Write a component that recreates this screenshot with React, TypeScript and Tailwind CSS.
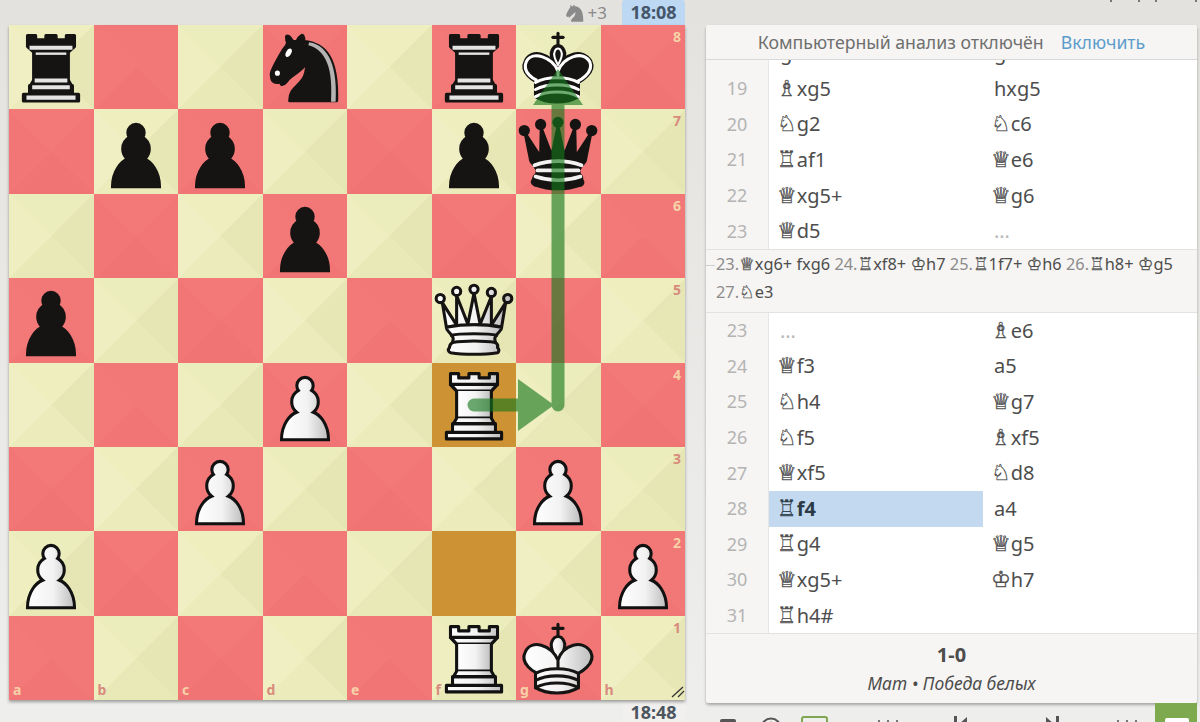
import React from "react";

const LIGHT_A = "bg-[conic-gradient(from_45deg,#e7e7b6_0_90deg,#ebebbb_90deg_180deg,#efefc3_180deg_270deg,#eeeebf_270deg_360deg)]";
const LIGHT_B = "bg-[conic-gradient(from_45deg,#e6e6b4_0_90deg,#e9e9b8_90deg_180deg,#eeeec1_180deg_270deg,#ecedbd_270deg_360deg)]";
const DARK_A = "bg-[conic-gradient(from_45deg,#f27777_0_90deg,#f17575_90deg_180deg,#f37979_180deg_270deg,#f27777_270deg_360deg)]";
const DARK_B = "bg-[conic-gradient(from_45deg,#f27676_0_90deg,#f07474_90deg_180deg,#f27676_180deg_270deg,#f37878_270deg_360deg)]";

const common = { fillRule: "evenodd" as const, stroke: "#000", strokeWidth: 1.5, strokeLinecap: "round" as const, strokeLinejoin: "round" as const };
const W = "url(#wg)";
const PAWN = "M22.5 9c-2.21 0-4 1.79-4 4 0 .89.29 1.71.78 2.38C17.33 16.5 16 18.59 16 21c0 2.03.94 3.84 2.41 5.03-3 1.06-7.41 5.55-7.41 13.47h23c0-7.92-4.41-12.41-7.41-13.47 1.47-1.19 2.41-3 2.41-5.03 0-2.41-1.33-4.5-3.28-5.62.49-.67.78-1.49.78-2.38 0-2.21-1.79-4-4-4z";

const pieces: Record<string, React.ReactNode> = {
  P: <path d={PAWN} fill={W} stroke="#111" strokeWidth={1.5} strokeLinecap="round" />,
  p: <path d={PAWN} fill="#161412" stroke="#161412" strokeWidth={1.5} strokeLinecap="round" />,
  R: (
    <g {...common} stroke="#111" fill={W}>
      <path d="M9 39h27v-3H9v3zM12 36v-4h21v4H12zM11 14V9h4v2h5V9h5v2h5V9h4v5" strokeLinecap="butt" />
      <path d="M34 14l-3 3H14l-3-3" />
      <path d="M31 17v12.5H14V17" strokeLinecap="butt" strokeLinejoin="miter" />
      <path d="M31 29.5l1.5 2.5h-20l1.5-2.5" />
      <path d="M11 14h23" fill="none" strokeLinejoin="miter" />
    </g>
  ),
  r: (
    <g {...common} fill="#161412" stroke="#161412">
      <path d="M9 39h27v-3H9v3zM12.5 32l1.5-2.5h17l1.5 2.5h-20zM12 36v-4h21v4H12z" strokeLinecap="butt" />
      <path d="M14 29.5v-13h17v13H14z" strokeLinecap="butt" strokeLinejoin="miter" />
      <path d="M14 16.5L11 14h23l-3 2.5H14zM11 14V9h4v2h5V9h5v2h5V9h4v5H11z" strokeLinecap="butt" />
      <path d="M12 14.6h21M14.5 29.6h16M13.3 32.7h18.4M10.5 37.5h24" fill="none" stroke="#e4e4e4" strokeWidth={1.9} strokeLinecap="butt" strokeLinejoin="miter" />
      <path d="M15 17.3h15" fill="none" stroke="#e4e4e4" strokeWidth={1.1} strokeLinecap="butt" />
    </g>
  ),
  n: (
    <g {...common} fill="none" stroke="#161412">
      <path d="M22 10c10.5 1 16.5 8 16 29H15c0-9 10-6.5 8-21" fill="#161412" />
      <path d="M24 18c.38 2.91-5.55 7.37-8 9-3 2-2.82 4.34-5 4-1.042-.94 1.41-3.04 0-3-1 0 .19 1.23-1 2-1 0-4.003 1-4-4 0-2 6-12 6-12s1.89-1.9 2-3.5c-.73-.994-.5-2-.5-3 1-1 3 2.5 3 2.5h2s.78-1.992 2.5-3c1 0 1 3 1 3" fill="#161412" />
      <path d="M9.5 25.5a.5.5 0 1 1-1 0 .5.5 0 1 1 1 0zm5.433-9.75a.5 1.5 30 1 1-.866-.5.5 1.5 30 1 1 .866.5z" fill="#fff" stroke="#fff" />
      <path d="M24.55 10.4l-.45 1.45.5.15c3.15 1 5.65 2.49 7.9 6.75S35.75 29.06 35.25 39l-.05.5h2.25l.05-.5c.5-10.06-.88-16.85-3.25-21.34-2.37-4.49-5.79-6.64-9.19-7.16l-.51-.1z" fill="#b5b3b3" stroke="none" />
    </g>
  ),
  k: (
    <g {...common} fill="none" stroke="#161412">
      <path d="M22.5 11.63V6" strokeLinejoin="miter" />
      <path d="M22.5 25s4.5-7.5 3-10.5c0 0-1-2.5-3-2.5s-3 2.5-3 2.5c-1.5 3 3 10.5 3 10.5" fill="#161412" strokeLinecap="butt" strokeLinejoin="miter" />
      <path d="M11.5 37c5.5 3.5 15.5 3.5 21 0v-7s9-4.5 6-10.5c-4-6.5-13.5-3.5-16 4V27v-3.5c-3.5-7.5-13-10.5-16-4-3 6 5 10 5 10V37z" fill="#161412" />
      <path d="M20 8h5" strokeLinejoin="miter" />
      <path d="M22.5 21.5s2.6-4.7 1.6-6.6c0 0-.6-1.4-1.6-1.4s-1.6 1.4-1.6 1.4c-1 1.9 1.6 6.6 1.6 6.6" stroke="#fff" strokeWidth={1} />
      <path d="M32 29.5s8.5-4 6.03-9.65C34.15 14 25 18 22.5 24.5l.01 2.1-.01-2.1C20 18 9.906 14 6.997 19.85c-2.497 5.65 4.853 9 4.853 9" stroke="#fff" />
      <path d="M11.5 30c5.5-3 15.5-3 21 0m-21 3.5c5.5-3 15.5-3 21 0m-21 3.5c5.5-3 15.5-3 21 0" stroke="#fff" />
    </g>
  ),
  K: (
    <g {...common} stroke="#161412" fill="none">
      <path d="M22.5 11.63V6M20 8h5" strokeLinejoin="miter" />
      <path d="M22.5 25s4.5-7.5 3-10.5c0 0-1-2.5-3-2.5s-3 2.5-3 2.5c-1.5 3 3 10.5 3 10.5" fill={W} strokeLinecap="butt" strokeLinejoin="miter" />
      <path d="M11.5 37c5.5 3.5 15.5 3.5 21 0v-7s9-4.5 6-10.5c-4-6.5-13.5-3.5-16 4V27v-3.5c-3.5-7.5-13-10.5-16-4-3 6 5 10 5 10V37z" fill={W} />
      <path d="M11.5 30c5.5-3 15.5-3 21 0m-21 3.5c5.5-3 15.5-3 21 0m-21 3.5c5.5-3 15.5-3 21 0" />
    </g>
  ),
  Q: (
    <g {...common} stroke="#161412" fill={W}>
      <path d="M8 12a2 2 0 1 1-4 0 2 2 0 1 1 4 0zM24.5 7.5a2 2 0 1 1-4 0 2 2 0 1 1 4 0zM41 12a2 2 0 1 1-4 0 2 2 0 1 1 4 0zM16 8.5a2 2 0 1 1-4 0 2 2 0 1 1 4 0zM33 9a2 2 0 1 1-4 0 2 2 0 1 1 4 0z" />
      <path d="M9 26c8.5-1.5 21-1.5 27 0l2-12-7 11V11l-5.5 13.5-3-15-3 15-5.5-14V25L7 14l2 12z" strokeLinecap="butt" />
      <path d="M9 26c0 2 1.5 2 2.5 4 1 1.5 1 1 .5 3.5-1.5 1-1.5 2.5-1.5 2.5-1.5 1.5.5 2.5.5 2.5 6.5 1 16.5 1 23 0 0 0 1.5-1 0-2.5 0 0 .5-1.5-1-2.5-.5-2.5-.5-2 .5-3.5 1-2 2.5-2 2.5-4-8.5-1.5-18.5-1.5-27 0z" strokeLinecap="butt" />
      <path d="M11.5 30c3.5-1 18.5-1 22 0M12 33.5c6-1 15-1 21 0" fill="none" />
    </g>
  ),
  q: (
    <g {...common} fill="#161412" stroke="#161412">
      <g stroke="none">
        <circle cx="6" cy="12" r="2.75" />
        <circle cx="14" cy="9" r="2.75" />
        <circle cx="22.5" cy="8" r="2.75" />
        <circle cx="31" cy="9" r="2.75" />
        <circle cx="39" cy="12" r="2.75" />
      </g>
      <path d="M9 26c8.5-1.5 21-1.5 27 0l2.5-12.5L31 25l-.3-14.1-5.2 13.6-3-14.5-3 14.5-5.2-13.6L14 25 6.5 13.5 9 26z" strokeLinecap="butt" />
      <path d="M9 26c0 2 1.5 2 2.5 4 1 1.5 1 1 .5 3.5-1.5 1-1.5 2.5-1.5 2.5-1.5 1.5.5 2.5.5 2.5 6.5 1 16.5 1 23 0 0 0 1.5-1 0-2.5 0 0 .5-1.5-1-2.5-.5-2.5-.5-2 .5-3.5 1-2 2.5-2 2.5-4-8.5-1.5-18.5-1.5-27 0z" strokeLinecap="butt" />
      <path d="M11 38.5a35 35 1 0 0 23 0" fill="none" strokeLinecap="butt" />
      <path d="M11 29a35 35 1 0 1 23 0M12.5 31.5h20M11.5 34.5a35 35 1 0 0 22 0" fill="none" stroke="#f2f2f2" strokeWidth={1.8} />
    </g>
  ),
};

function Piece({ p }: { p: string }) {
  const rook = p === "r" || p === "R";
  return (
    <svg viewBox="0 0 45 45" preserveAspectRatio="none" className={rook ? "w-[92px] h-[98px] mb-[4px] shrink-0" : "w-[92px] h-[92px] shrink-0"}>
      <defs>
        <linearGradient id="wg" x1="0" y1="0" x2="1" y2="0">
          <stop offset="0" stopColor="#ffffff" />
          <stop offset="0.55" stopColor="#f2f2f2" />
          <stop offset="1" stopColor="#bdbdbd" />
        </linearGradient>
      </defs>
      {pieces[p]}
    </svg>
  );
}

const position = [
  "r..n.rk.",
  ".pp..pq.",
  "...p....",
  "p....Q..",
  "...P.R..",
  "..P...P.",
  "P......P",
  ".....RK.",
];

function Board() {
  const files = "abcdefgh";
  return (
    <div className="relative grid grid-cols-8 grid-rows-8 w-[676px] h-[675px] shadow-[0_2px_3px_rgba(0,0,0,0.35)]">
      {position.flatMap((row, r) =>
        row.split("").map((c, f) => {
          const light = (r + f) % 2 === 0;
          const v = (r * 3 + f) % 4 < 2;
          const hl = f === 5 && (r === 4 || r === 6);
          const bg = hl ? "bg-[#cc9233]" : light ? (v ? LIGHT_A : LIGHT_B) : v ? DARK_A : DARK_B;
          const labelColor = light ? "text-[#d88b7c]" : "text-[#f6d2a8]";
          return (
            <div key={`${r}-${f}`} className={`relative flex items-center justify-center ${bg}`}>
              {c !== "." && <Piece p={c} />}
              {f === 7 && (
                <span className={`absolute right-[4px] top-[2px] text-[14px] font-bold leading-[20px] ${labelColor}`}>{8 - r}</span>
              )}
              {r === 7 && (
                <span className={`absolute left-[4px] bottom-0 text-[14px] font-bold leading-[20px] ${labelColor}`}>{files[f]}</span>
              )}
            </div>
          );
        })
      )}
      <svg viewBox="0 0 676 675" className="absolute inset-0 w-full h-full pointer-events-none">
        <g fill="#15781b" opacity="0.62">
          <path d="M465 373.5H509V386.5H465A6.5 6.5 0 0 1 465 373.5Z" />
          <path d="M509 354L545 380L509 406Z" />
          <path d="M542.5 80H555.5V380A6.5 6.5 0 0 1 542.5 380Z" />
          <path d="M524 80L549 44L574 80Z" />
        </g>
        <path d="M663 672L674 662M669 672L675 666" stroke="#333" strokeWidth="1.3" fill="none" />
      </svg>
    </div>
  );
}

type Move = [string, string, string];
const movesA: Move[] = [
  ["18", "g4", "g5"],
  ["19", "♗xg5", "hxg5"],
  ["20", "♘g2", "♘c6"],
  ["21", "♖af1", "♕e6"],
  ["22", "♕xg5+", "♕g6"],
  ["23", "♕d5", "…"],
];
const movesB: Move[] = [
  ["23", "…", "♗e6"],
  ["24", "♕f3", "a5"],
  ["25", "♘h4", "♕g7"],
  ["26", "♘f5", "♗xf5"],
  ["27", "♕xf5", "♘d8"],
  ["28", "♖f4", "a4"],
  ["29", "♖g4", "♕g5"],
  ["30", "♕xg5+", "♔h7"],
  ["31", "♖h4#", ""],
];

const FIG = "♔♕♖♗♘";

function San({ text, small }: { text: string; small?: boolean }) {
  const fig = text && FIG.includes(text[0]) ? text[0] : "";
  const rest = fig ? text.slice(1) : text;
  return (
    <span>
      {fig && (
        <span className={small ? "text-[17.5px] leading-none [-webkit-text-stroke:0.25px_currentColor]" : "text-[22px] leading-none [-webkit-text-stroke:0.3px_currentColor]"}>
          {fig}
        </span>
      )}
      {rest}
    </span>
  );
}

function Cell({ text, active }: { text: string; active?: boolean }) {
  const cls = active
    ? "bg-[#c3d9f0] font-bold text-[#2b3a46]"
    : text === "…"
    ? "text-[#b8b8b8]"
    : "text-[#4d4d4d]";
  const pad = text && FIG.includes(text[0]) ? "pl-[8px]" : "pl-[11px]";
  return (
    <div className={`h-full flex items-center ${pad} ${cls}`}>
      <San text={text} />
    </div>
  );
}

function Rows({ moves }: { moves: Move[] }) {
  return (
    <div className="grid grid-cols-[63px_214px_1fr] auto-rows-[35.6px] text-[20px]">
      {moves.map((m) => (
        <React.Fragment key={m[0] + m[1]}>
          <div className="flex items-center justify-center bg-[#f6f5f3] border-r border-[#e6e6e6] text-[#b4b4b4] text-[18px]">{m[0]}</div>
          <Cell text={m[1]} active={m[1] === "♖f4"} />
          <Cell text={m[2]} />
        </React.Fragment>
      ))}
    </div>
  );
}

function Ply({ n, moves }: { n: string; moves: string[] }) {
  return (
    <>
      <span className="text-[#8c8c8c]">{n}.</span>
      {moves.map((m, i) => (
        <React.Fragment key={m}>
          {i > 0 && " "}
          <San text={m} small />
        </React.Fragment>
      ))}{" "}
    </>
  );
}

function Toolbar() {
  const ink = "#555";
  return (
    <div className="flex items-start h-[19px] overflow-hidden">
      <svg className="ml-[13px] mt-[15px] shrink-0" width="18" height="22" viewBox="0 0 18 22">
        <rect x="1" y="1" width="16" height="20" rx="2" fill={ink} />
      </svg>
      <svg className="ml-[23px] mt-[14px] shrink-0" width="22" height="22" viewBox="0 0 22 22">
        <circle cx="11" cy="11" r="9.5" fill="none" stroke={ink} strokeWidth="2" />
        <circle cx="11" cy="11" r="5.5" fill="none" stroke={ink} strokeWidth="1.5" />
      </svg>
      <div className="ml-[19px] mt-[13px] w-[27px] h-[22px] rounded-[3px] border-2 border-[#7fa650] shrink-0"></div>
      <svg className="ml-[48px] mt-[17px] shrink-0" width="24" height="12" viewBox="0 0 24 12">
        <path d="M3 0v12M12 0v12M21 0v12" stroke="#777" strokeWidth="2" />
      </svg>
      <svg className="ml-[52px] mt-[13px] shrink-0" width="18" height="14" viewBox="0 0 18 14">
        <path d="M2 0h3v14H2zM15 1L7 8l8 6z" fill={ink} />
      </svg>
      <svg className="ml-[73px] mt-[13px] shrink-0" width="18" height="14" viewBox="0 0 18 14">
        <path d="M13 0h3v14h-3zM3 1l8 7-8 6z" fill={ink} />
      </svg>
      <svg className="ml-[54px] mt-[17px] shrink-0" width="24" height="12" viewBox="0 0 24 12">
        <path d="M3 0v12M12 0v12M21 0v12" stroke="#777" strokeWidth="2" />
      </svg>
      <div className="ml-[16px] w-[43px] h-[19px] bg-[#7fa94f] flex justify-center shrink-0">
        <div className="mt-[15px] w-[24px] h-[10px] bg-white rounded-[2px]"></div>
      </div>
    </div>
  );
}

function MoveList() {
  return (
    <div className="w-[491px] h-[678px] shrink-0 flex flex-col rounded-[3px] bg-white shadow-[0_2px_3px_rgba(0,0,0,0.3)]">
      <div className="h-[35px] shrink-0 flex items-center justify-center gap-[17px] bg-[#f6f5f3] border-b border-[#d9d9d9] text-[17.7px] rounded-t-[3px]">
        <span className="text-[#6f6f6f]">Компьютерный анализ отключён</span>
        <span className="text-[#5c9ccc]">Включить</span>
      </div>
      <div className="h-[189px] shrink-0 overflow-hidden">
        <div className="-mt-[24.6px]">
          <Rows moves={movesA} />
        </div>
      </div>
      <div className="relative h-[64px] shrink-0 bg-[#f6f5f3] border-y border-[#e2e2e2] pl-[10px] pr-[10px] text-[16.35px] leading-[28px] text-[#4d4d4d]">
        <span className="absolute left-0 top-[15px] w-[9px] h-px bg-[#cfcfcf]"></span>
        <Ply n="23" moves={["♕xg6+", "fxg6"]} />
        <Ply n="24" moves={["♖xf8+", "♔h7"]} />
        <Ply n="25" moves={["♖1f7+", "♔h6"]} />
        <Ply n="26" moves={["♖h8+", "♔g5"]} />
        <Ply n="27" moves={["♘e3"]} />
      </div>
      <div className="h-[320px] shrink-0 overflow-hidden">
        <Rows moves={movesB} />
      </div>
      <div className="flex-1 flex flex-col items-center justify-center bg-[#f6f5f3] border-t border-[#e2e2e2] rounded-b-[3px]">
        <div className="text-[20px] font-bold text-[#4d4d4d] leading-[28px]">1-0</div>
        <div className="text-[17.5px] italic text-[#4d4d4d] leading-[28px]">Мат • Победа белых</div>
      </div>
    </div>
  );
}

export default function App() {
  return (
    <div className="flex w-[1200px] h-[722px] overflow-hidden pl-[9px] bg-[linear-gradient(180deg,#e3e2de_0px,#e6e5e2_120px,#eeeeed_722px)] font-['Noto_Sans','DejaVu_Sans',sans-serif]">
      <div className="w-[676px] shrink-0 flex flex-col">
        <div className="h-[25px] flex items-center justify-end">
          <svg viewBox="0 0 45 45" className="w-[24px] h-[24px] mr-[1px]">
            <path d="M22 10c10.5 1 16.5 8 16 29H15c0-9 10-6.5 8-21M24 18c.38 2.91-5.55 7.37-8 9-3 2-2.82 4.34-5 4-1.042-.94 1.41-3.04 0-3-1 0 .19 1.23-1 2-1 0-4.003 1-4-4 0-2 6-12 6-12s1.89-1.9 2-3.5c-.73-.994-.5-2-.5-3 1-1 3 2.5 3 2.5h2s.78-1.992 2.5-3c1 0 1 3 1 3" fill="#8a8a8a" />
          </svg>
          <span className="text-[17px] text-[#8a8a8a] mr-[15px]">+3</span>
          <div className="w-[63px] h-[25px] flex items-center justify-center bg-[#bcd8f2] rounded-t-[3px] text-[18px] font-bold text-[#46566a]">18:08</div>
        </div>
        <Board />
        <div className="flex justify-end">
          <div className="w-[63px] h-[22px] flex items-center justify-center bg-[#f1f0ee] text-[18px] font-bold text-[#4d5560] pt-[2px]">18:48</div>
        </div>
      </div>
      <div className="ml-[21px] w-[491px] shrink-0 flex flex-col">
        <div className="h-[25px] shrink-0 flex items-start">
          <span className="ml-[404px] w-[2px] h-[2px] bg-[#777]"></span>
          <span className="ml-[26px] w-[2px] h-[2px] bg-[#777]"></span>
          <span className="ml-[15px] w-[2px] h-[2px] bg-[#777]"></span>
          <span className="ml-[38px] w-[2px] h-[2px] bg-[#777]"></span>
        </div>
        <MoveList />
        <Toolbar />
      </div>
    </div>
  );
}
